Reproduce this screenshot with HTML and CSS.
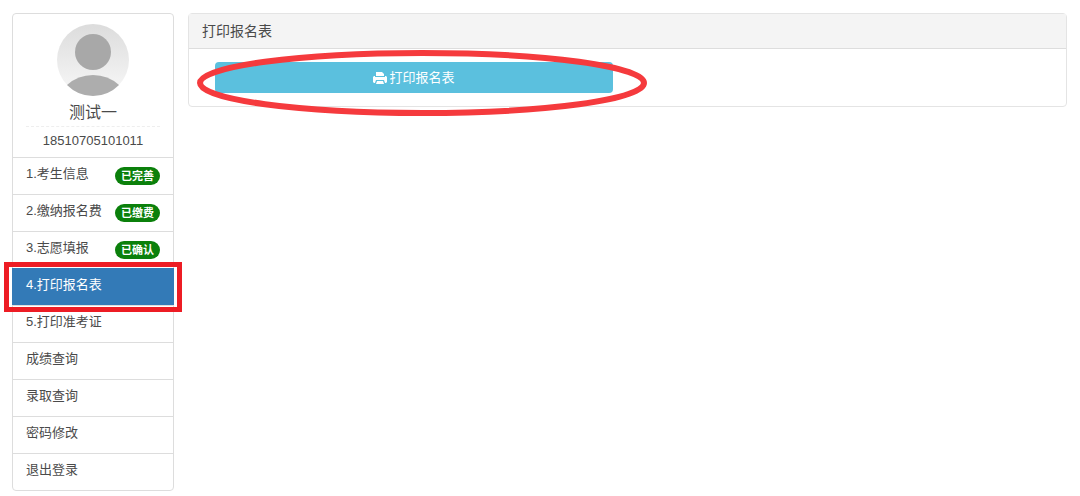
FILE: index.html
```
<!DOCTYPE html>
<html lang="zh-CN">
<head>
  <meta charset="UTF-8">
  <title>打印报名表</title>
  <link rel="stylesheet" href="styles.css">
</head>
<body>

  <div class="container">
    <aside class="sidebar">
      <div class="user">
        <svg class="avatar" viewBox="0 0 72 72">
          <defs>
            <linearGradient id="avatarBg" x1="0" y1="0" x2="0" y2="1">
              <stop offset="0" stop-color="#dcdcdc"/>
              <stop offset="1" stop-color="#f8f8f8"/>
            </linearGradient>
          </defs>
          <circle cx="36" cy="36" r="36" fill="url(#avatarBg)"/>
          <circle cx="36" cy="28" r="18" fill="#a8a8a8"/>
          <path d="M10 61Q21 51 36 51T62 61Q51 72 36 72T10 61Z" fill="#adadad"/>
        </svg>
        <div class="user-name">测试一</div>
        <div class="user-id">18510705101011</div>
      </div>
      <nav class="menu">
        <a href="#">1.考生信息<span class="badge">已完善</span></a>
        <a href="#">2.缴纳报名费<span class="badge">已缴费</span></a>
        <a href="#">3.志愿填报<span class="badge">已确认</span></a>
        <a href="#" class="active">4.打印报名表</a>
        <a href="#">5.打印准考证</a>
        <a href="#">成绩查询</a>
        <a href="#">录取查询</a>
        <a href="#">密码修改</a>
        <a href="#">退出登录</a>
      </nav>
    </aside>

    <main class="panel">
      <h1 class="panel-heading">打印报名表</h1>
      <div class="panel-body">
        <div class="col-half">
          <button type="button" class="btn-info">
            <svg class="icon-print" viewBox="0 0 14 14" fill="#fff">
              <path d="M3 1h6l2 2v2H3z"/>
              <path d="M1 5h1v1h10V5h1l1 1v5l-1 1h-1l-1-3H3l-1 3H1l-1-1V6z"/>
              <path d="M4 10h6l1 3H3z"/>
            </svg>打印报名表
          </button>
          <svg class="ring" viewBox="0 0 450 66" preserveAspectRatio="none">
            <ellipse cx="225" cy="33" rx="222" ry="30" fill="none" stroke="#f53a3d" stroke-width="6"/>
          </svg>
        </div>
      </div>
    </main>
  </div>

</body>
</html>
```

FILE: styles.css
```
* {
  box-sizing: border-box;
}
body {
  margin: 0;
  font-family: "Liberation Sans", "Noto Sans CJK SC", sans-serif;
  font-size: 13px;
  line-height: 18px;
  color: #4a4a4a;
  background: #fff;
}
.container {
  display: flex;
  align-items: flex-start;
  gap: 14px;
  padding: 13px 13px 0 12px;
}

/* left column */
.sidebar {
  flex: 0 0 162px;
  border: 1px solid #ddd;
  border-radius: 4px;
}
.user {
  padding: 10px 13px 7px;
  text-align: center;
}
.avatar {
  display: block;
  width: 72px;
  height: 72px;
  margin: 0 auto 6px;
}
.user-name {
  padding-bottom: 3px;
  font-size: 16px;
  line-height: 21px;
  border-bottom: 1px dashed #eee;
}
.user-id {
  padding-top: 5px;
}
.menu a {
  position: relative;
  display: flex;
  justify-content: space-between;
  height: 37px;
  padding: 7px 13px;
  border-top: 1px solid #ddd;
  color: #4a4a4a;
  text-decoration: none;
}
.menu a.active {
  margin: 0 -1px;
  padding: 7px 14px;
  color: #fff;
  background: #337ab7;
  border-color: #337ab7;
}
.menu a.active::after {
  content: "";
  position: absolute;
  inset: -7px -8px;
  border: 5px solid #ed1c24;
  z-index: 1;
}
.badge {
  height: 18px;
  margin-top: 2px;
  padding: 0 6px;
  font-size: 11px;
  font-weight: bold;
  line-height: 18px;
  color: #fff;
  background: #0b800b;
  border-radius: 9px;
}

/* right column */
.panel {
  flex: 1;
  border: 1px solid #e4e4e4;
  border-radius: 4px;
}
.panel-heading {
  margin: 0;
  padding: 8px 13px;
  font-size: 14px;
  font-weight: normal;
  line-height: 18px;
  background: #f4f4f4;
  border-bottom: 1px solid #ddd;
}
.panel-body {
  padding: 13px 16px 13px 13px;
}
.col-half {
  position: relative;
  width: 50%;
  padding: 0 13px;
}
.btn-info {
  display: flex;
  align-items: center;
  justify-content: center;
  gap: 2px;
  width: 100%;
  height: 31px;
  padding: 0;
  border: none;
  border-radius: 4px;
  font: inherit;
  color: #fff;
  background: #5bc0de;
  cursor: pointer;
}
.icon-print {
  width: 14px;
  height: 14px;
}
.ring {
  position: absolute;
  top: -12px;
  left: -5px;
  width: calc(100% + 26px);
  height: 66px;
  pointer-events: none;
}
```
